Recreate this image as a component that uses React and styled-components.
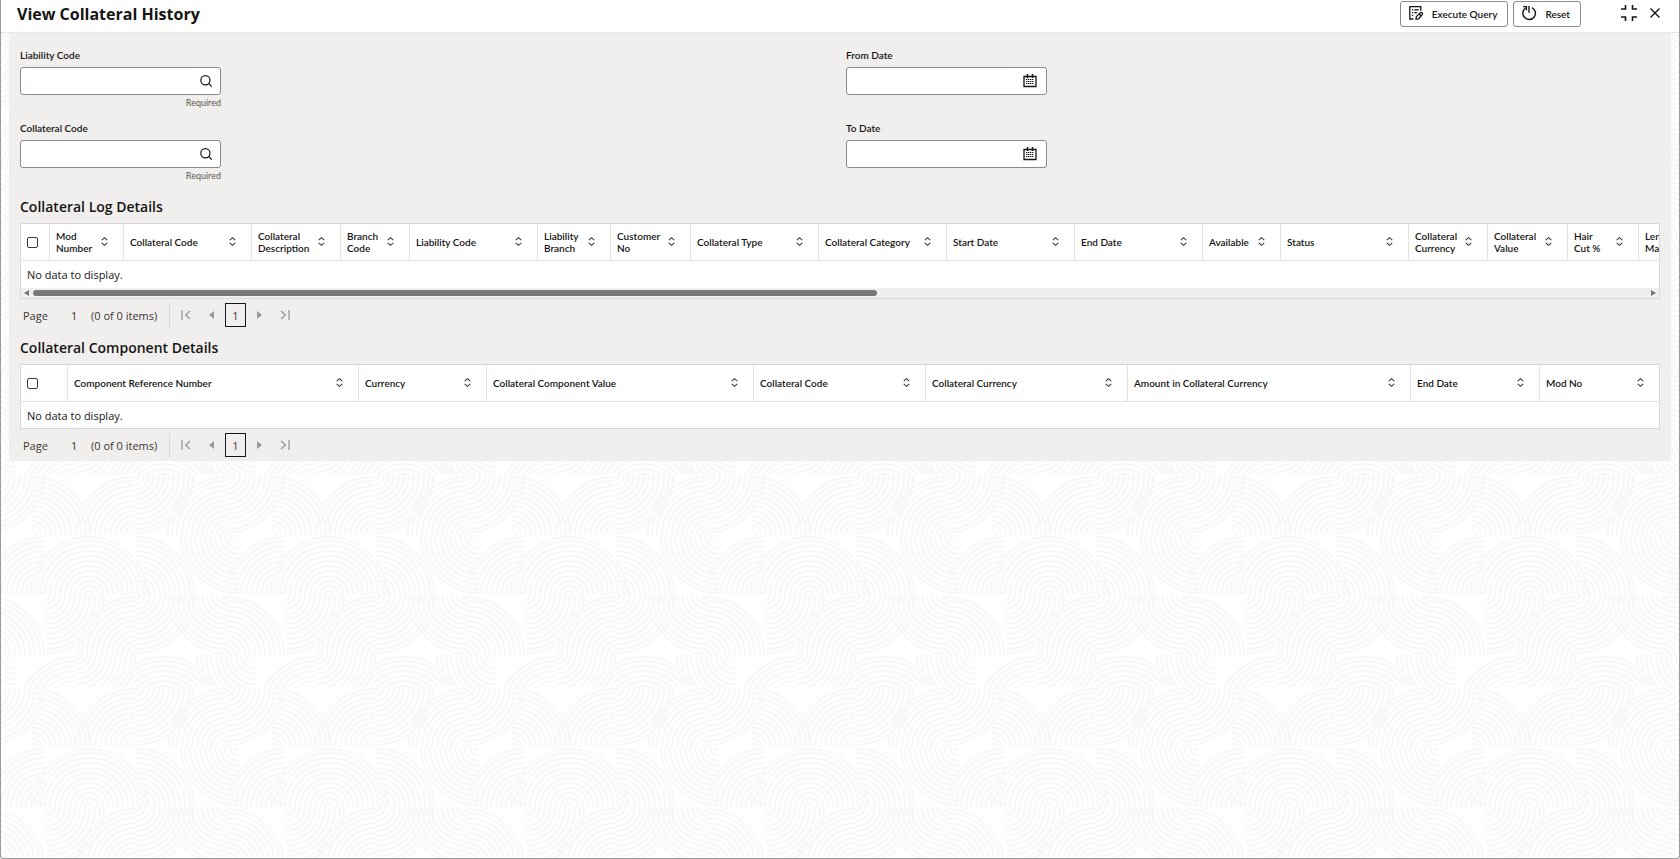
import { useId } from 'react';
import styled, { createGlobalStyle } from 'styled-components';

const RINGS = [4, 9, 14, 19, 24, 29, 34, 39, 44, 49, 54, 58];

// each row is a band of quarter circles: [center x, bottom or top edge, direction]
const ARC_ROWS = [
	{
		y: 0,
		height: 60,
		arcs: [
			[225, 'top', 1],
			[31, 'bottom', 1],
			[133, 'bottom', -1],
			[134, 'top', 1],
			[225, 'bottom', -1],
		],
	},
	{
		y: 60,
		height: 60,
		arcs: [
			[44, 'bottom', -1],
			[88, 'bottom', -1],
			[88, 'bottom', 1],
			[135, 'bottom', 1],
			[238, 'top', -1],
		],
	},
	{
		y: 120,
		height: 60,
		arcs: [
			[225, 'bottom', 1],
			[45, 'top', 1],
			[135, 'bottom', -1],
			[135, 'top', 1],
			[225, 'top', -1],
		],
	},
	{
		y: 180,
		height: 32,
		arcs: [
			[75, 'bottom', -1],
			[76, 'top', 1],
			[163, 'bottom', -1],
			[163, 'bottom', 1],
			[254, 'top', -1],
		],
	},
];

const arcPath = (cx, edge, dir) => {
	const cy = edge === 'top' ? 0 : 60;
	const down = edge === 'top' ? 1 : -1;
	const sweep = dir * down > 0 ? 1 : 0;

	return RINGS.map(
		(r) => `M${cx + dir * r} ${cy}A${r} ${r} 0 0 ${sweep} ${cx} ${cy + down * r}`
	).join('');
};

const patternRows = ARC_ROWS.map(({ y, height, arcs }) => {
	const d = arcs
		.flatMap(([cx, edge, dir]) =>
			[-240, 0, 240].map((shift) => arcPath(cx + shift, edge, dir))
		)
		.join('');

	return `<svg y="${y}" width="240" height="${height}" overflow="hidden"><path d="${d}"/></svg>`;
}).join('');

const pattern = encodeURIComponent(
	`<svg xmlns="http://www.w3.org/2000/svg" width="240" height="212" fill="none" stroke="#f7f7f7" stroke-width="2">${patternRows}</svg>`
);

const GlobalStyle = createGlobalStyle`
	*,
	*::before,
	*::after {
		box-sizing: border-box;
	}

	body {
		margin: 0;
		font-family: "Open Sans", "Noto Sans", sans-serif;
		font-size: 11px;
		color: #161513;
		background-color: #fff;
	}

	button,
	input {
		font: inherit;
		color: inherit;
	}

	h1,
	h2,
	p {
		margin: 0;
	}
`;

const Window = styled.main`
	display: flex;
	flex-direction: column;
	min-height: 100vh;
	border: 1px solid #9b9b9b;
	border-top: 0;
	border-radius: 0 0 3px 3px;
	background: #fff url("data:image/svg+xml,${pattern}") 0 51px;
`;

const TitleBar = styled.header`
	display: flex;
	align-items: flex-start;
	justify-content: space-between;
	height: 33px;
	padding: 1px 18px 0 16px;
	border-bottom: 1px dotted #d4d4d4;
	background-color: #fff;
`;

const Title = styled.h1`
	font-size: 16px;
	font-weight: 700;
	line-height: 26px;
`;

const Actions = styled.div`
	display: flex;
	align-items: center;
	gap: 5px;
`;

const ActionButton = styled.button`
	display: flex;
	align-items: center;
	gap: 8px;
	height: 26px;
	padding: 0 10px 0 7px;
	border: 1px solid #8b8a88;
	border-radius: 3px;
	background-color: #fff;
	font-family: Lato, sans-serif;
	font-size: 10px;
	font-weight: 600;
	white-space: nowrap;

	& svg {
		margin-bottom: 2px;
	}
`;

const WindowControls = styled.div`
	display: flex;
	align-items: center;
	gap: 12px;
	margin-left: 35px;
	padding-bottom: 2px;
`;

const IconButton = styled.button`
	display: flex;
	align-items: center;
	justify-content: center;
	padding: 0;
	border: 0;
	background: none;
`;

const Panel = styled.section`
	margin: 0 8px;
	padding: 15px 11px 0;
	background-color: #f0efed;
`;

const Form = styled.form`
	display: grid;
	grid-template-columns: 1fr 1fr;
	gap: 11px 12px;
	padding-bottom: 7px;
`;

const FieldShell = styled.div`
	display: flex;
	flex-direction: column;
	width: 201px;
	min-height: 62px;

	& label {
		margin-bottom: 5px;
		font-family: Lato, sans-serif;
		font-size: 10px;
		font-weight: 600;
		line-height: 14px;
	}
`;

const InputBox = styled.div`
	display: flex;
	align-items: center;
	height: 28px;
	padding-right: 8px;
	border: 1px solid #8b8a88;
	border-radius: 3px;
	background-color: #fff;

	& input {
		flex: 1;
		min-width: 0;
		height: 100%;
		padding: 0 8px;
		border: 0;
		outline: 0;
		background: none;
	}
`;

const Hint = styled.span`
	margin-top: 1px;
	font-family: Lato, sans-serif;
	font-size: 9px;
	line-height: 14px;
	text-align: right;
	color: #5a5652;
`;

const SectionTitle = styled.h2`
	font-size: 14px;
	font-weight: 600;
	line-height: 33px;
`;

const TableFrame = styled.div`
	border: 1px solid #d9d8d6;
	background-color: #fff;
	overflow: hidden;
`;

const DataTable = styled.table`
	width: ${({ $width }) => $width};
	border-collapse: separate;
	border-spacing: 0;
	table-layout: fixed;

	& th {
		height: 37px;
		padding: 0 15px 0 6px;
		border-right: 1px solid #e3e2e0;
		border-bottom: 1px solid #e3e2e0;
		font-family: Lato, sans-serif;
		font-size: 10px;
		font-weight: 600;
		line-height: 12px;
		text-align: left;
		white-space: pre;
	}

	& th:last-child {
		border-right: 0;
	}

	& td {
		height: ${({ $rowHeight }) => $rowHeight}px;
		padding: 0 6px;
		font-size: 11px;
	}
`;

const HeadCell = styled.div`
	display: flex;
	align-items: center;
	justify-content: space-between;

	& svg {
		margin-bottom: 2px;
	}
`;

const CheckBox = styled.input`
	display: block;
	appearance: none;
	width: 11px;
	height: 11px;
	margin: 0;
	border: 1px solid #3a3632;
	border-radius: 2px;
	background-color: #fff;
`;

const ScrollBar = styled.div`
	display: flex;
	align-items: center;
	justify-content: space-between;
	height: 10px;
	padding: 0 3px;
	background-color: #f0efed;
`;

const ScrollTrack = styled.div`
	flex: 1;
	margin: 0 4px;
`;

const ScrollThumb = styled.div`
	width: 52.3%;
	height: 6px;
	border-radius: 3px;
	background-color: #777;
`;

const PagerShell = styled.nav`
	display: flex;
	align-items: center;
	height: 32px;
	padding-left: 3px;
	color: #3a3632;
`;

const PageLabel = styled.span`
	width: 48px;
`;

const PageNumber = styled.span`
	width: 20px;
`;

const ItemCount = styled.span`
	width: 78px;
`;

const PagerButtons = styled.div`
	display: flex;
	align-items: center;
	gap: 5px;
	height: 25px;
	padding-left: 11px;
	border-left: 1px solid #d9d8d6;
	color: #999794;
`;

const PagerStep = styled(IconButton)`
	justify-content: ${({ $align }) => $align || 'center'};
	width: 17px;
	height: 24px;
	color: inherit;
`;

const CurrentPage = styled.button`
	width: 21px;
	height: 24px;
	padding: 0;
	border: 1px solid #161513;
	background: none;
	color: #3a3632;
`;

const SearchIcon = () => (
	<svg width="14" height="14" viewBox="0 0 14 14" fill="none" stroke="#161513" strokeWidth="1.2">
		<circle cx="7.4" cy="6.2" r="4.6" />
		<path d="M10.6 9.4l3.2 3.2" />
	</svg>
);

const CalendarIcon = () => (
	<svg width="15" height="14" viewBox="0 0 15 14" fill="none" stroke="#161513">
		<path d="M1 2.5h12v10H1z" strokeWidth="1.3" />
		<path d="M4.5 0v4M9.5 0v4" strokeWidth="1.5" />
		<path d="M3 5.5h8M3 7.5h8M3 9.5h8" strokeDasharray="1.4 .6" />
	</svg>
);

const QueryIcon = () => (
	<svg width="16" height="16" viewBox="0 0 16 16" fill="none" stroke="#161513" strokeWidth="1.3">
		<path d="M5.5 14H1.8V1.7h11v4.1" />
		<path d="M4 4.8h1.2M6.3 4.8h4.5M4 7.6h1.2M6.3 7.6h2.7M4 10.4h1.2" strokeWidth="1.2" />
		<path d="M8 14.2l.4-2.7 4-3.8c1.3-.8 2.8.8 1.9 2l-3.7 4.1z" strokeWidth="1.3" />
		<path d="M11.2 9l2 2" strokeWidth="1.2" />
	</svg>
);

const ResetIcon = () => (
	<svg width="16" height="16" viewBox="0 0 16 16" fill="none" stroke="#161513" strokeWidth="1.4">
		<path d="M4.6 3A6.3 6.3 0 1 0 11 2.6" />
		<path d="M8 1v6.7M2.2 1.6h3.2v3.6" />
	</svg>
);

const CollapseIcon = () => (
	<svg width="16" height="16" viewBox="0 0 16 16" fill="none" stroke="#161513" strokeWidth="1.6">
		<path d="M4.5 0v4H0M11.5 0v4H16M4.5 16v-4H0M11.5 16v-4H16" />
	</svg>
);

const CloseIcon = () => (
	<svg width="12" height="12" viewBox="0 0 12 12" fill="none" stroke="#161513" strokeWidth="1.4">
		<path d="M1.5 1.5l9 9M10.5 1.5l-9 9" />
	</svg>
);

const SortIcon = () => (
	<svg width="7" height="9" viewBox="0 0 7 9" fill="none" stroke="#3a3632" strokeWidth="1.1">
		<path d="M.7 3.1L3.5.7l2.8 2.4M.7 5.9l2.8 2.4 2.8-2.4" />
	</svg>
);

const EndIcon = ({ last }) => (
	<svg width="10" height="10" viewBox="0 0 10 10" fill="none" stroke="currentColor" strokeWidth="1.3">
		<path d={last ? 'M1 1l4.4 4L1 9M9 0v10' : 'M9 1L4.6 5 9 9M1 0v10'} />
	</svg>
);

const ArrowIcon = ({ right }) => (
	<svg width="5" height="8" viewBox="0 0 5 8" fill="currentColor">
		<path d={right ? 'M0 0l5 4-5 4z' : 'M5 0L0 4l5 4z'} />
	</svg>
);

const ScrollArrow = ({ right }) => (
	<svg width="5" height="6" viewBox="0 0 5 6" fill="#777">
		<path d={right ? 'M0 0l5 3-5 3z' : 'M5 0L0 3l5 3z'} />
	</svg>
);

const logColumns = [
	['Mod\nNumber', 74],
	['Collateral Code', 128],
	['Collateral\nDescription', 89],
	['Branch\nCode', 69],
	['Liability Code', 128],
	['Liability\nBranch', 73],
	['Customer\nNo', 80],
	['Collateral Type', 128],
	['Collateral Category', 128],
	['Start Date', 128],
	['End Date', 128],
	['Available', 78],
	['Status', 128],
	['Collateral\nCurrency', 79],
	['Collateral\nValue', 80],
	['Hair\nCut %', 71],
	['Lendable\nMargin', 80],
];

const componentColumns = [
	['Component Reference Number', 291],
	['Currency', 128],
	['Collateral Component Value', 267],
	['Collateral Code', 172],
	['Collateral Currency', 202],
	['Amount in Collateral Currency', 283],
	['End Date', 129],
	['Mod No', 119],
];

const Field = ({ label, icon, action, required }) => {
	const id = useId();

	return (
		<FieldShell>
			<label htmlFor={id}>{label}</label>
			<InputBox>
				<input id={id} type="text" required={required} />
				<IconButton type="button" aria-label={action}>
					{icon}
				</IconButton>
			</InputBox>
			{required && <Hint>Required</Hint>}
		</FieldShell>
	);
};

const Table = ({ columns, selectWidth, scrollable }) => {
	const total = columns.reduce((sum, [, width]) => sum + width, selectWidth);

	return (
		<TableFrame>
			<DataTable
				$width={scrollable ? `${total}px` : '100%'}
				$rowHeight={scrollable ? 27 : 26}
			>
				<colgroup>
					<col style={{ width: selectWidth }} />
					{columns.map(([name, width]) => (
						<col key={name} style={{ width }} />
					))}
				</colgroup>
				<thead>
					<tr>
						<th>
							<CheckBox type="checkbox" aria-label="Select all" />
						</th>
						{columns.map(([name]) => (
							<th key={name}>
								<HeadCell>
									{name}
									<IconButton type="button" aria-label="Sort">
										<SortIcon />
									</IconButton>
								</HeadCell>
							</th>
						))}
					</tr>
				</thead>
				<tbody>
					<tr>
						<td colSpan={columns.length + 1}>No data to display.</td>
					</tr>
				</tbody>
			</DataTable>
			{scrollable && (
				<ScrollBar>
					<ScrollArrow />
					<ScrollTrack>
						<ScrollThumb />
					</ScrollTrack>
					<ScrollArrow right />
				</ScrollBar>
			)}
		</TableFrame>
	);
};

const Pager = () => (
	<PagerShell aria-label="Pagination">
		<PageLabel>Page</PageLabel>
		<PageNumber>1</PageNumber>
		<ItemCount>(0 of 0 items)</ItemCount>
		<PagerButtons>
			<PagerStep type="button" aria-label="First page" $align="flex-start">
				<EndIcon />
			</PagerStep>
			<PagerStep type="button" aria-label="Previous page">
				<ArrowIcon />
			</PagerStep>
			<CurrentPage type="button">1</CurrentPage>
			<PagerStep type="button" aria-label="Next page">
				<ArrowIcon right />
			</PagerStep>
			<PagerStep type="button" aria-label="Last page" $align="flex-end">
				<EndIcon last />
			</PagerStep>
		</PagerButtons>
	</PagerShell>
);

const App = () => {
	return (
		<>
			<GlobalStyle />
			<Window>
				<TitleBar>
					<Title>View Collateral History</Title>
					<Actions>
						<ActionButton type="button">
							<QueryIcon />
							Execute Query
						</ActionButton>
						<ActionButton type="button">
							<ResetIcon />
							Reset
						</ActionButton>
						<WindowControls>
							<IconButton type="button" aria-label="Collapse">
								<CollapseIcon />
							</IconButton>
							<IconButton type="button" aria-label="Close">
								<CloseIcon />
							</IconButton>
						</WindowControls>
					</Actions>
				</TitleBar>
				<Panel>
					<Form>
						<Field label="Liability Code" icon={<SearchIcon />} action="Search" required />
						<Field label="From Date" icon={<CalendarIcon />} action="Select date" />
						<Field label="Collateral Code" icon={<SearchIcon />} action="Search" required />
						<Field label="To Date" icon={<CalendarIcon />} action="Select date" />
					</Form>
					<SectionTitle>Collateral Log Details</SectionTitle>
					<Table columns={logColumns} selectWidth={29} scrollable />
					<Pager />
					<SectionTitle>Collateral Component Details</SectionTitle>
					<Table columns={componentColumns} selectWidth={47} />
					<Pager />
				</Panel>
			</Window>
		</>
	);
};

export default App;
